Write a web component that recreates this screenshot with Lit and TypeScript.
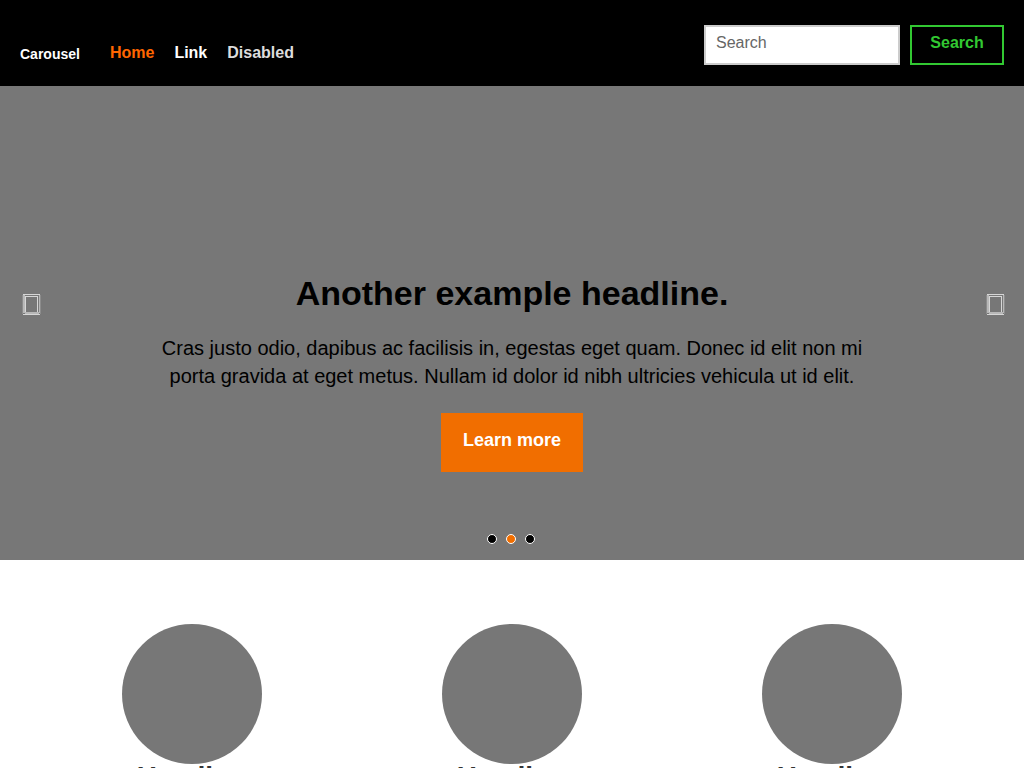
import { LitElement, html, css, svg } from "lit";
import { customElement, state } from "lit/decorators.js";

@customElement("app-root")
export class AppRoot extends LitElement {
  @state() private active = 1;

  static styles = css`
    :host {
      display: block;
      height: 100vh;
      overflow-x: hidden;
      overflow-y: auto;
      scrollbar-width: none;
      background: #fff;
      color: #000;
      font: 20px/28px "Liberation Sans", Arial, sans-serif;
    }
    * { box-sizing: border-box; }
    a { text-decoration: none; }
    .navbar {
      display: flex;
      align-items: flex-end;
      padding: 25px 20px 21px;
      background: #000;
      font-size: 16px;
      font-weight: bold;
      line-height: 20px;
    }
    .brand { color: #fff; font-size: 14px; padding-bottom: 1px; }
    .links {
      display: flex;
      flex: 1;
      gap: 20px;
      list-style: none;
      margin: 0;
      padding: 0 0 2px 30px;
    }
    .links a { color: #fff; }
    .links .current { color: #ff6600; }
    .links .disabled { color: #ddd; }
    .search { display: flex; gap: 10px; }
    .field, .submit {
      height: 40px;
      margin: 0;
      border-radius: 0;
      font-family: inherit;
      font-size: 16px;
      line-height: 20px;
    }
    .field {
      width: 196px;
      padding: 4px 10px 8px;
      border: 2px solid #ccc;
      background: #fff;
    }
    .field::placeholder { color: #666; opacity: 1; }
    .submit {
      min-width: 94px;
      padding: 4px 18px 8px;
      border: 2px solid #32c832;
      background: transparent;
      color: #32c832;
      font-weight: bold;
    }
    .carousel {
      display: grid;
      grid-template-columns: 15% 1fr 15%;
      background: #777;
      padding-top: 186px;
    }
    .caption { text-align: center; }
    h1 { margin: 0; font-size: 34px; line-height: 42px; }
    .caption p { margin: 20px 0 23px; }
    .more {
      display: inline-block;
      padding: 15px 22px 20px;
      background: #f16e00;
      color: #fff;
      font-size: 18px;
      font-weight: bold;
      line-height: 24px;
    }
    .arrow {
      display: flex;
      align-items: center;
      padding: 0 19px 70px 22px;
      border: 0;
      background: none;
      height: 134px;
    }
    .next { justify-content: flex-end; }
    .dots {
      display: flex;
      justify-content: center;
      gap: 9px;
      padding: 62px 2px 16px 0;
    }
    .dot {
      width: 10px;
      height: 10px;
      padding: 0;
      border: 1px solid #fff;
      border-radius: 50%;
      background: #000;
    }
    .dot.on { background: #f16e00; }
    .marketing {
      display: grid;
      grid-template-columns: repeat(3, 1fr);
      padding: 64px 32px;
      text-align: center;
    }
    .circle { display: block; margin: 0 auto; }
    h2 { margin: 0; color: #333; font-size: 28px; line-height: 26px; }
  `;

  private box() {
    return html`<svg width="19" height="21" viewBox="0 0 19 21" shape-rendering="crispEdges" aria-hidden="true">
      ${svg`<path d="M0 1h1v19H0zM18 1h1v19h-1z" fill="#8c8c8c"></path>
      <path d="M1 1h2v18H1zM17 1h1v18h-1zM3 18h14v2H3z" fill="#b8b8b8"></path>
      <path d="M1 0h17v1H1zM3 2h13v1H3zM3 3h1v15H3zM15 3h1v15h-1zM1 20h17v1H1z" fill="#d6d6d6"></path>`}
    </svg>`;
  }

  render() {
    return html`
      <header class="navbar">
        <a class="brand" href="#">Carousel</a>
        <ul class="links">
          <li><a class="current" href="#">Home</a></li>
          <li><a href="#">Link</a></li>
          <li><a class="disabled" aria-disabled="true" href="#">Disabled</a></li>
        </ul>
        <form class="search" @submit=${(e: Event) => e.preventDefault()}>
          <input class="field" type="search" placeholder="Search" aria-label="Search">
          <button class="submit">Search</button>
        </form>
      </header>
      <main>
        <section class="carousel">
          <button class="arrow" aria-label="Previous" @click=${() => (this.active = (this.active + 2) % 3)}>${this.box()}</button>
          <div class="caption">
            <h1>Another example headline.</h1>
            <p>Cras justo odio, dapibus ac facilisis in, egestas eget quam. Donec id elit non mi porta gravida at eget metus. Nullam id dolor id nibh ultricies vehicula ut id elit.</p>
            <a class="more" href="#">Learn more</a>
            <div class="dots">
              ${[0, 1, 2].map((i) => html`<button class="dot ${i === this.active ? "on" : ""}" aria-label="Slide ${i + 1}" @click=${() => (this.active = i)}></button>`)}
            </div>
          </div>
          <button class="arrow next" aria-label="Next" @click=${() => (this.active = (this.active + 1) % 3)}>${this.box()}</button>
        </section>
        <section class="marketing">
          ${[0, 1, 2].map(() => html`<article>
            <svg class="circle" width="140" height="140" aria-hidden="true"><circle cx="70" cy="70" r="70" fill="#777"></circle></svg>
            <h2>Heading</h2>
          </article>`)}
        </section>
      </main>`;
  }
}
